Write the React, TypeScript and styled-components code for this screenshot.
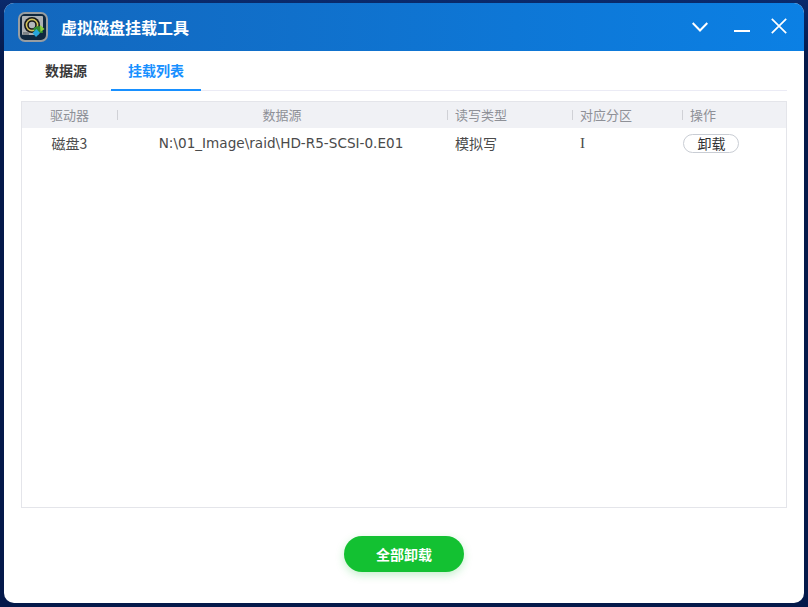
import styled, { createGlobalStyle } from "styled-components";

const GlobalStyle = createGlobalStyle`
  html, body {
    margin: 0;
    padding: 0;
    height: 607px;
    overflow: hidden;
    background: #04194a;
    font-family: "Noto Sans CJK SC", "Noto Sans", sans-serif;
  }
`;

const columns = "95px 330px 125px 110px 1fr";

export default function App() {
  return (
    <Desktop>
      <GlobalStyle />
      <Window>
        <TitleBar>
          <Logo />
          <Title>虚拟磁盘挂载工具</Title>
          <WindowButtons>
            <IconButton>
              <svg width="16" height="10" viewBox="0 0 16 10" fill="none" stroke="#fff" strokeWidth="2">
                <path d="M0.7 1 L8 8.5 L15.3 1" />
              </svg>
            </IconButton>
            <MinimizeButton>
              <svg width="16" height="2" viewBox="0 0 16 2" fill="#fff">
                <rect width="16" height="2" />
              </svg>
            </MinimizeButton>
            <CloseButton>
              <svg width="16" height="16" viewBox="0 0 16 16" fill="none" stroke="#fff" strokeWidth="1.7">
                <path d="M0.8 0.8 L15.2 15.2 M15.2 0.8 L0.8 15.2" />
              </svg>
            </CloseButton>
          </WindowButtons>
        </TitleBar>

        <Content>
          <Tabs>
            <Tab>数据源</Tab>
            <Tab $active>挂载列表</Tab>
          </Tabs>

          <Table>
            <HeaderRow>
              <HeaderCell $center>驱动器</HeaderCell>
              <HeaderCell $center $divided>数据源</HeaderCell>
              <HeaderCell $divided>读写类型</HeaderCell>
              <HeaderCell $divided>对应分区</HeaderCell>
              <HeaderCell $divided>操作</HeaderCell>
            </HeaderRow>
            <Row>
              <Cell $center>磁盘3</Cell>
              <PathCell>N:\01_Image\raid\HD-R5-SCSI-0.E01</PathCell>
              <Cell>模拟写</Cell>
              <LetterCell>I</LetterCell>
              <Cell>
                <SmallButton>卸载</SmallButton>
              </Cell>
            </Row>
          </Table>

          <Footer>
            <PrimaryButton>全部卸载</PrimaryButton>
          </Footer>
        </Content>
      </Window>
    </Desktop>
  );
}

function Logo() {
  return (
    <svg width="30" height="30" viewBox="0 0 30 30" style={{ flexShrink: 0 }}>
      <rect x="1" y="1" width="28" height="28" rx="6" fill="#10283f" stroke="#989da1" strokeWidth="2" />
      <path d="M5 4 h19 a1 1 0 0 1 1 1 v10 l-5 8 h-15 a1 1 0 0 1 -1 -1 v-17 a1 1 0 0 1 1 -1 z" fill="#aeb2b5" />
      <circle cx="14" cy="13" r="8" fill="#17191b" />
      <circle cx="14" cy="13" r="5.6" fill="none" stroke="#d2c25a" strokeWidth="1.6" />
      <circle cx="14" cy="13" r="3.2" fill="#b4b8ba" />
      <path d="M5 20 h6 v3 h-6 z" fill="#7d8387" />
      <path d="M15 17 a7 7 0 0 1 9 -2 l1 6 h-7 z" fill="#2f8a32" />
      <path d="M22 13 l4.5 4 l-4 3 z" fill="#8ed13e" />
      <path d="M14.5 21 l4 -4 l3.5 4 l-4 4 z" fill="#27a7dc" />
    </svg>
  );
}

const Desktop = styled.div`
  width: 808px;
  height: 607px;
  padding: 3px 4px 4px;
  box-sizing: border-box;
  background: linear-gradient(180deg, #0a2a6c 0, #04194a 60px);
`;

const Window = styled.div`
  width: 800px;
  height: 600px;
  display: flex;
  flex-direction: column;
  background: #fff;
  border-radius: 10px;
  overflow: hidden;
`;

const TitleBar = styled.div`
  height: 48px;
  flex-shrink: 0;
  display: flex;
  align-items: center;
  padding: 0 17px 0 14px;
  background: linear-gradient(90deg, #1367bd 0%, #0b80e4 100%);
  color: #fff;
`;

const Title = styled.div`
  margin-left: 13px;
  font-size: 16px;
  font-weight: 700;
`;

const WindowButtons = styled.div`
  margin-left: auto;
  display: flex;
  align-items: center;
`;

const IconButton = styled.div`
  display: flex;
  align-items: center;
  justify-content: center;
  height: 18px;
`;

const MinimizeButton = styled(IconButton)`
  margin-left: 26px;
  padding-top: 8px;
`;

const CloseButton = styled(IconButton)`
  margin-left: 21px;
  margin-top: -2px;
`;

const Content = styled.div`
  flex: 1;
  display: flex;
  flex-direction: column;
  padding: 0 17px;
`;

const Tabs = styled.div`
  height: 40px;
  flex-shrink: 0;
  box-sizing: border-box;
  display: flex;
  border-bottom: 1px solid #ebebf5;
`;

const Tab = styled.div<{ $active?: boolean }>`
  width: 90px;
  height: 40px;
  box-sizing: border-box;
  display: flex;
  align-items: center;
  justify-content: center;
  font-size: 14px;
  font-weight: 700;
  color: ${(p) => (p.$active ? "#1890ff" : "#3a3a3a")};
  border-bottom: 2px solid ${(p) => (p.$active ? "#1890ff" : "transparent")};
`;

const Table = styled.div`
  height: 407px;
  margin-top: 10px;
  box-sizing: border-box;
  flex-shrink: 0;
  border: 1px solid #e4e5ea;
`;

const HeaderRow = styled.div`
  display: grid;
  grid-template-columns: ${columns};
  height: 26px;
  background: #f0f1f5;
`;

const HeaderCell = styled.div<{ $center?: boolean; $divided?: boolean }>`
  position: relative;
  display: flex;
  align-items: center;
  justify-content: ${(p) => (p.$center ? "center" : "flex-start")};
  padding-left: ${(p) => (p.$center ? 0 : 8)}px;
  padding-bottom: 1px;
  font-size: 13px;
  color: #8e9097;
  &::before {
    content: "";
    display: ${(p) => (p.$divided ? "block" : "none")};
    position: absolute;
    left: 0;
    top: 8px;
    width: 1px;
    height: 10px;
    background: #d0d1d6;
  }
`;

const Row = styled.div`
  display: grid;
  grid-template-columns: ${columns};
  height: 30px;
`;

const Cell = styled.div<{ $center?: boolean }>`
  display: flex;
  align-items: center;
  justify-content: ${(p) => (p.$center ? "center" : "flex-start")};
  padding-left: ${(p) => (p.$center ? 0 : 8)}px;
  font-size: 14px;
  color: #4a4a4a;
`;

const PathCell = styled(Cell)`
  justify-content: center;
  padding-left: 0;
  padding-right: 2px;
  font-family: "DejaVu Sans", sans-serif;
  font-size: 13.6px;
`;

const LetterCell = styled(Cell)`
  font-family: "Liberation Serif", serif;
  font-size: 15px;
`;

const SmallButton = styled.div`
  width: 56px;
  height: 19px;
  margin-left: -7px;
  padding-left: 1px;
  box-sizing: border-box;
  display: flex;
  align-items: center;
  justify-content: center;
  border: 1px solid #c9cdd4;
  border-radius: 10px;
  font-size: 14px;
  color: #333;
`;

const Footer = styled.div`
  flex: 1;
  display: flex;
  justify-content: center;
  padding-top: 28px;
`;

const PrimaryButton = styled.div`
  width: 120px;
  height: 36px;
  display: flex;
  align-items: center;
  justify-content: center;
  border-radius: 18px;
  background: #13c132;
  box-shadow: 0 3px 8px rgba(19, 193, 50, 0.25);
  color: #fff;
  font-size: 14px;
  font-weight: 700;
`;
